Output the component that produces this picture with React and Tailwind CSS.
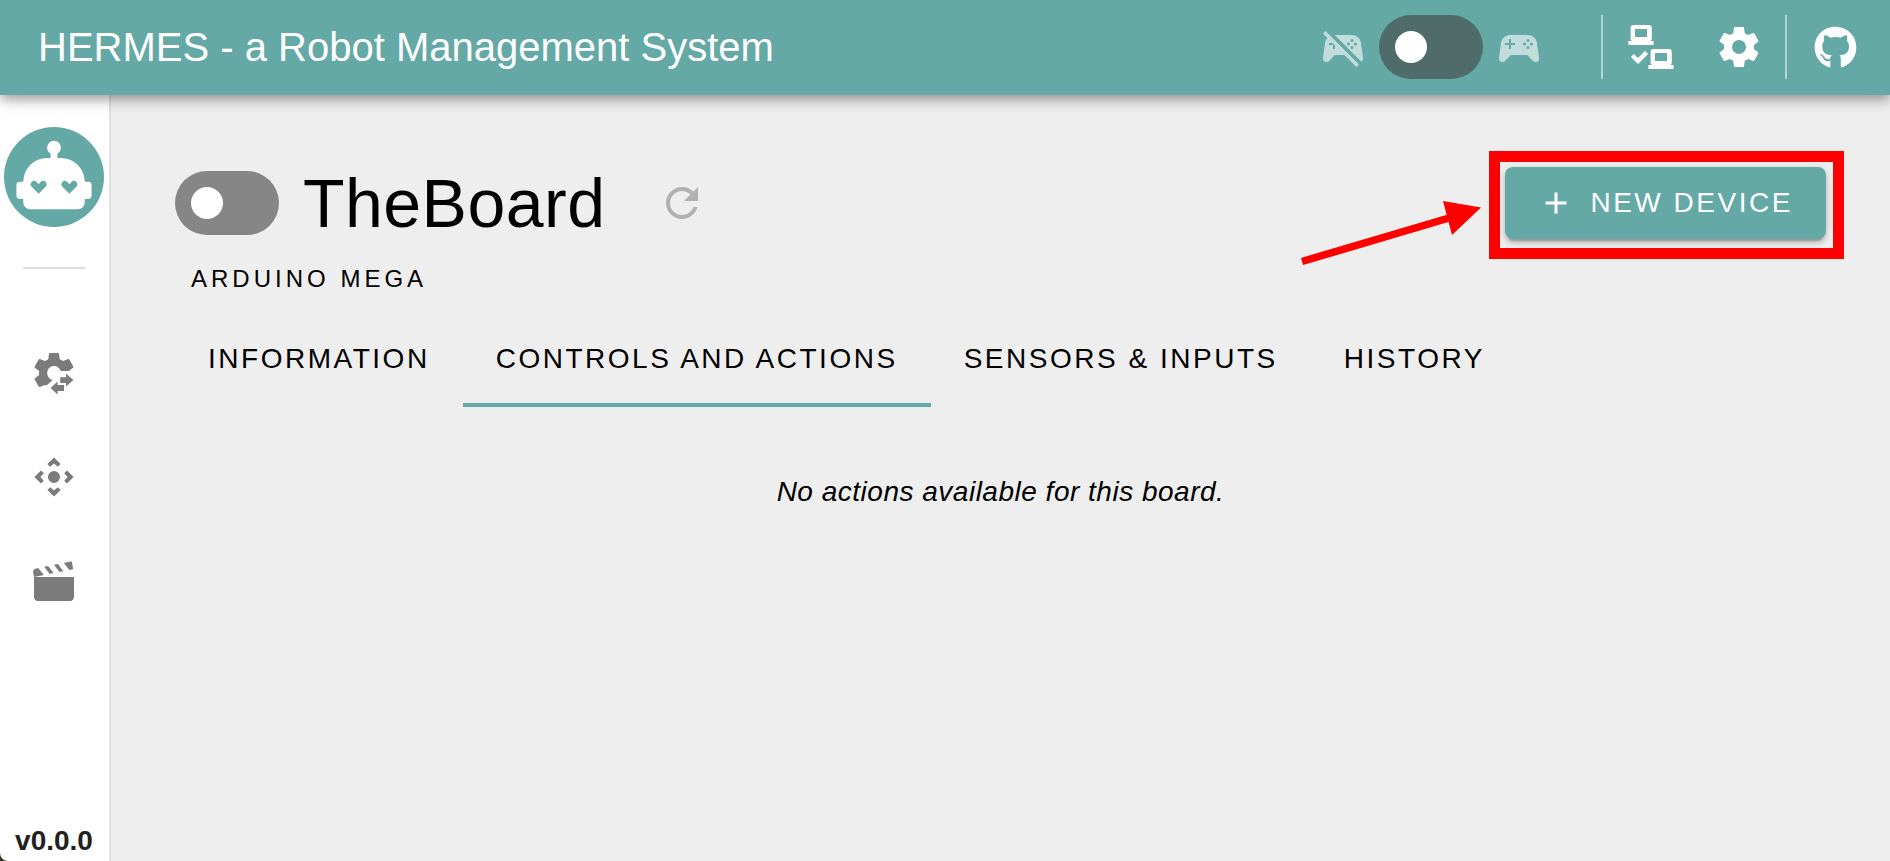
import { useState } from "react";
import { FaGithub } from "react-icons/fa";

const paths = {
  controllerOff:
    "M2,5.27L3.28,4L20,20.72L18.73,22L12.73,16H7.97L5,19C4.67,19.3 4.23,19.5 3.75,19.5A1.75,1.75 0 0,1 2,17.75V17.5L3,10.12C3.1,9.09 3.53,8.17 4.19,7.46L2,5.27M5,10V11H7V13H8V11.27L6.73,10H5M16.5,6C18.86,6 20.79,7.81 21,10.12L22,17.5V17.75C22,18.41 21.64,19 21.1,19.28L7.82,6H16.5M16.5,8A0.75,0.75 0 0,0 15.75,8.75A0.75,0.75 0 0,0 16.5,9.5A0.75,0.75 0 0,0 17.25,8.75A0.75,0.75 0 0,0 16.5,8M14.75,9.75A0.75,0.75 0 0,0 14,10.5A0.75,0.75 0 0,0 14.75,11.25A0.75,0.75 0 0,0 15.5,10.5A0.75,0.75 0 0,0 14.75,9.75M18.25,9.75A0.75,0.75 0 0,0 17.5,10.5A0.75,0.75 0 0,0 18.25,11.25A0.75,0.75 0 0,0 19,10.5A0.75,0.75 0 0,0 18.25,9.75M16.5,11.5A0.75,0.75 0 0,0 15.75,12.25A0.75,0.75 0 0,0 16.5,13A0.75,0.75 0 0,0 17.25,12.25A0.75,0.75 0 0,0 16.5,11.5Z",
  controller:
    "M7.97,16L5,19C4.67,19.3 4.23,19.5 3.75,19.5A1.75,1.75 0 0,1 2,17.75V17.5L3,10.12C3.21,7.81 5.14,6 7.5,6H16.5C18.86,6 20.79,7.81 21,10.12L22,17.5V17.75A1.75,1.75 0 0,1 20.25,19.5C19.77,19.5 19.33,19.3 19,19L16.03,16H7.97M7,8V10H5V11H7V13H8V11H10V10H8V8H7M16.5,8A0.75,0.75 0 0,0 15.75,8.75A0.75,0.75 0 0,0 16.5,9.5A0.75,0.75 0 0,0 17.25,8.75A0.75,0.75 0 0,0 16.5,8M14.75,9.75A0.75,0.75 0 0,0 14,10.5A0.75,0.75 0 0,0 14.75,11.25A0.75,0.75 0 0,0 15.5,10.5A0.75,0.75 0 0,0 14.75,9.75M18.25,9.75A0.75,0.75 0 0,0 17.5,10.5A0.75,0.75 0 0,0 18.25,11.25A0.75,0.75 0 0,0 19,10.5A0.75,0.75 0 0,0 18.25,9.75M16.5,11.5A0.75,0.75 0 0,0 15.75,12.25A0.75,0.75 0 0,0 16.5,13A0.75,0.75 0 0,0 17.25,12.25A0.75,0.75 0 0,0 16.5,11.5Z",
  laptops:
    "M0.7,9H2.4A1.5,1.5 0 0,1 1.8,7.7V2.5A1.5,1.5 0 0,1 3.3,1H10.9A1.5,1.5 0 0,1 12.4,2.5V7.7A1.5,1.5 0 0,1 11.8,9H13.3V11H0.7V9M4,3V7H10V3H4M10.7,21H12.4A1.5,1.5 0 0,1 11.8,19.7V14.5A1.5,1.5 0 0,1 13.3,13H20.9A1.5,1.5 0 0,1 22.4,14.5V19.7A1.5,1.5 0 0,1 21.8,21H23.3V23H10.7V21M14,15V19H20V15H14M5.5,20.5L2,17L3.4,15.5L5.5,17.5L9.1,13.9L10.5,15.5L5.5,20.5Z",
  cog: "M12,15.5A3.5,3.5 0 0,1 8.5,12A3.5,3.5 0 0,1 12,8.5A3.5,3.5 0 0,1 15.5,12A3.5,3.5 0 0,1 12,15.5M19.43,12.97C19.47,12.65 19.5,12.33 19.5,12C19.5,11.67 19.47,11.34 19.43,11L21.54,9.37C21.73,9.22 21.78,8.95 21.66,8.73L19.66,5.27C19.54,5.05 19.27,4.96 19.05,5.05L16.56,6.05C16.04,5.66 15.5,5.32 14.87,5.07L14.5,2.42C14.46,2.18 14.25,2 14,2H10C9.75,2 9.54,2.18 9.5,2.42L9.13,5.07C8.5,5.32 7.96,5.66 7.44,6.05L4.95,5.05C4.73,4.96 4.46,5.05 4.34,5.27L2.34,8.73C2.21,8.95 2.27,9.22 2.46,9.37L4.57,11C4.53,11.34 4.5,11.67 4.5,12C4.5,12.33 4.53,12.65 4.57,12.97L2.46,14.63C2.27,14.78 2.21,15.05 2.34,15.27L4.34,18.73C4.46,18.95 4.73,19.03 4.95,18.95L7.44,17.94C7.96,18.34 8.5,18.68 9.13,18.93L9.5,21.58C9.54,21.82 9.75,22 10,22H14C14.25,22 14.46,21.82 14.5,21.58L14.87,18.93C15.5,18.67 16.04,18.34 16.56,17.94L19.05,18.95C19.27,19.03 19.54,18.95 19.66,18.73L21.66,15.27C21.78,15.05 21.73,14.78 21.54,14.63L19.43,12.97Z",
  robot:
    "M12,2A2,2 0 0,1 14,4C14,4.74 13.6,5.39 13,5.73V7H14A7,7 0 0,1 21,14H22A1,1 0 0,1 23,15V18A1,1 0 0,1 22,19H21V20A2,2 0 0,1 19,22H5A2,2 0 0,1 3,20V19H2A1,1 0 0,1 1,18V15A1,1 0 0,1 2,14H3A7,7 0 0,1 10,7H11V5.73C10.4,5.39 10,4.74 10,4A2,2 0 0,1 12,2M7.5,17.5L9.6,15.4A1.15,1.15 0 0,0 9.5,13.95C9.1,13.6 8.5,13.65 8.1,14.05L7.5,14.7L6.9,14.05C6.5,13.65 5.9,13.6 5.5,13.95A1.15,1.15 0 0,0 5.4,15.4L7.5,17.5M16.5,17.5L18.6,15.4A1.15,1.15 0 0,0 18.5,13.95C18.1,13.6 17.5,13.65 17.1,14.05L16.5,14.7L15.9,14.05C15.5,13.65 14.9,13.6 14.5,13.95A1.15,1.15 0 0,0 14.4,15.4L16.5,17.5Z",
  cogTransfer:
    "M19.43,11L21.54,9.37C21.73,9.22 21.78,8.95 21.66,8.73L19.66,5.27C19.54,5.05 19.27,4.96 19.05,5.05L16.56,6.05C16.04,5.66 15.5,5.32 14.87,5.07L14.5,2.42C14.46,2.18 14.25,2 14,2H10C9.75,2 9.54,2.18 9.5,2.42L9.13,5.07C8.5,5.32 7.96,5.66 7.44,6.05L4.95,5.05C4.73,4.96 4.46,5.05 4.34,5.27L2.34,8.73C2.21,8.95 2.27,9.22 2.46,9.37L4.57,11C4.5,11.67 4.5,12.33 4.57,12.97L2.46,14.63C2.27,14.78 2.21,15.05 2.34,15.27L4.34,18.73C4.46,18.95 4.73,19.03 4.95,18.95L7.44,17.94L8.2,18.3L11.4,15.45A3.5,3.5 0 1,1 15.4,11H19.43M18,12.2L21.7,15.5L18,18.7V17H15.1V14.1H18V12.2M13.8,16.2V18H17V21H13.8V22.7L10.3,19.5L13.8,16.2Z",
  move: "M12,2.2L15.3,5.5L13.9,6.9L12,5.2L10.1,6.9L8.7,5.5L12,2.2M12,21.8L8.7,18.5L10.1,17.1L12,18.8L13.9,17.1L15.3,18.5L12,21.8M2.2,12L5.5,8.7L6.9,10.1L5.2,12L6.9,13.9L5.5,15.3L2.2,12M21.8,12L18.5,15.3L17.1,13.9L18.8,12L17.1,10.1L18.5,8.7L21.8,12M12,9A3,3 0 0,1 15,12A3,3 0 0,1 12,15A3,3 0 0,1 9,12A3,3 0 0,1 12,9Z",
  movieOpen:
    "M20.84,2.18L16.91,2.96L19.65,6.5L21.62,6.1L20.84,2.18M13.97,3.54L12,3.93L14.75,7.46L16.71,7.07L13.97,3.54M9.07,4.5L7.1,4.91L9.85,8.44L11.81,8.05L9.07,4.5M4.16,5.5L3.18,5.69A2,2 0 0,0 1.61,8.04L2,10L6.9,9.03L4.16,5.5M2,10V20C2,21.11 2.9,22 4,22H20C21.11,22 22,21.11 22,20V10H2Z",
  refresh:
    "M17.65,6.35C16.2,4.9 14.21,4 12,4A8,8 0 0,0 4,12A8,8 0 0,0 12,20C15.73,20 18.84,17.45 19.73,14H17.65C16.83,16.33 14.61,18 12,18A6,6 0 0,1 6,12A6,6 0 0,1 12,6C13.66,6 15.14,6.69 16.22,7.78L13,11H20V4L17.65,6.35Z",
  plus: "M19,13H13V19H11V13H5V11H11V5H13V11H19V13Z",
};

function Icon({ name, className = "size-12" }) {
  return (
    <svg viewBox="0 0 24 24" fill="currentColor" aria-hidden="true" className={`shrink-0 ${className}`}>
      <path d={paths[name]} />
    </svg>
  );
}

function Switch({ label, track }) {
  return (
    <input
      type="checkbox"
      role="switch"
      aria-label={label}
      className={`flex h-16 w-26 shrink-0 cursor-pointer appearance-none items-center rounded-full px-4 before:size-8 before:rounded-full before:bg-white checked:justify-end ${track}`}
    />
  );
}

function Header() {
  return (
    <header className="relative z-10 flex shrink-0 items-center justify-between bg-[#64a9a6] pt-[15px] pr-[31px] pb-4 pl-[38px] text-white shadow-[0_4px_8px_-2px_rgba(0,0,0,0.2),0_8px_10px_rgba(0,0,0,0.14),0_2px_20px_rgba(0,0,0,0.12)]">
      <h1 className="text-[40px] leading-none">HERMES - a Robot Management System</h1>
      <div className="flex items-center">
        <div className="mr-[58px] flex items-center gap-3">
          <Icon name="controllerOff" className="size-12 opacity-60" />
          <Switch label="Gamepad control" track="bg-[#506c6a]" />
          <Icon name="controller" className="size-12 opacity-60" />
        </div>
        <div className="h-16 w-[2px] bg-white/50" />
        <nav className="mr-[22px] ml-6 flex gap-10">
          <a href="#connections" aria-label="Connections">
            <Icon name="laptops" />
          </a>
          <a href="#settings" aria-label="Settings">
            <Icon name="cog" />
          </a>
        </nav>
        <div className="mr-6 h-16 w-[2px] bg-white/50" />
        <a href="#github" aria-label="GitHub" className="flex size-12 items-center justify-center">
          <FaGithub className="size-[43px]" />
        </a>
      </div>
    </header>
  );
}

function Sidebar() {
  return (
    <aside className="flex w-[111px] shrink-0 flex-col items-center rounded-bl-[8px] border-r-2 border-[#dfdfdf] bg-white pt-8 pr-px">
      <a
        href="#home"
        aria-label="Home"
        className="flex size-[100px] items-center justify-center rounded-full bg-[#64a9a6] pb-1 text-white"
      >
        <Icon name="robot" className="size-[82px]" />
      </a>
      <div className="mt-10 h-[2px] w-[62px] bg-[#dfdfdf]" />
      <nav className="mt-20 flex flex-col gap-14 text-[#7b7b7b]">
        <a href="#boards" aria-label="Boards">
          <Icon name="cogTransfer" />
        </a>
        <a href="#controls" aria-label="Controls">
          <Icon name="move" />
        </a>
        <a href="#scenes" aria-label="Scenes">
          <Icon name="movieOpen" />
        </a>
      </nav>
      <p className="mt-auto text-[28px] leading-10 font-bold text-[#212121]">v0.0.0</p>
    </aside>
  );
}

function NewDevice() {
  return (
    <div className="relative">
      <button
        type="button"
        className="flex h-18 cursor-pointer items-center gap-4 rounded-lg bg-[#64a9a6] px-[33px] text-[28px] tracking-[0.09em] text-white shadow-[0_6px_2px_-4px_rgba(0,0,0,0.2),0_4px_4px_rgba(0,0,0,0.14),0_2px_10px_rgba(0,0,0,0.12)]"
      >
        <Icon name="plus" className="size-9" />
        NEW DEVICE
      </button>
      <div className="pointer-events-none absolute -top-4 -right-[18px] -bottom-5 -left-4 border-[11px] border-[#ff0000]" />
      <svg
        viewBox="0 0 184 70"
        aria-hidden="true"
        className="pointer-events-none absolute top-[31px] right-full mr-[22px] h-[70px] w-[184px]"
      >
        <path d="M3,63.5L150,20" stroke="#ff0000" strokeWidth="7.5" />
        <path d="M144,3L182,9.5L153,37Z" fill="#ff0000" />
      </svg>
    </div>
  );
}

const tabs = ["INFORMATION", "CONTROLS AND ACTIONS", "SENSORS & INPUTS", "HISTORY"];

function Board() {
  const [active, setActive] = useState(1);
  return (
    <main className="min-w-0 flex-1 bg-[#eeeeee] px-16 pt-[72px] text-black">
      <div className="flex items-center justify-between">
        <div className="flex items-center">
          <Switch label="Board enabled" track="bg-[#868686]" />
          <h2 className="ml-6 text-[68px] leading-[70px] tracking-[0.007em]">TheBoard</h2>
          <button type="button" aria-label="Refresh" className="ml-[53px] cursor-pointer text-[#b0b0b0]">
            <Icon name="refresh" />
          </button>
        </div>
        <NewDevice />
      </div>
      <p className="mt-5 ml-4 text-2xl leading-10 tracking-[0.167em]">ARDUINO MEGA</p>
      <div role="tablist" className="mt-3 flex">
        {tabs.map((tab, i) => (
          <button
            key={tab}
            type="button"
            role="tab"
            aria-selected={i === active}
            onClick={() => setActive(i)}
            className={`h-24 cursor-pointer border-y-4 border-t-transparent px-[33px] text-[28px] tracking-[0.09em] ${
              i === active ? "border-b-[#64a9a6]" : "border-b-transparent"
            }`}
          >
            {tab}
          </button>
        ))}
      </div>
      <p className="mt-[65px] text-center text-[28px] leading-10 tracking-[0.018em] italic">
        No actions available for this board.
      </p>
    </main>
  );
}

export default function App() {
  return (
    <div className="flex min-h-screen flex-col bg-[#3a352c] font-['Liberation_Sans',Arial,sans-serif]">
      <Header />
      <div className="flex flex-1">
        <Sidebar />
        <Board />
      </div>
    </div>
  );
}
